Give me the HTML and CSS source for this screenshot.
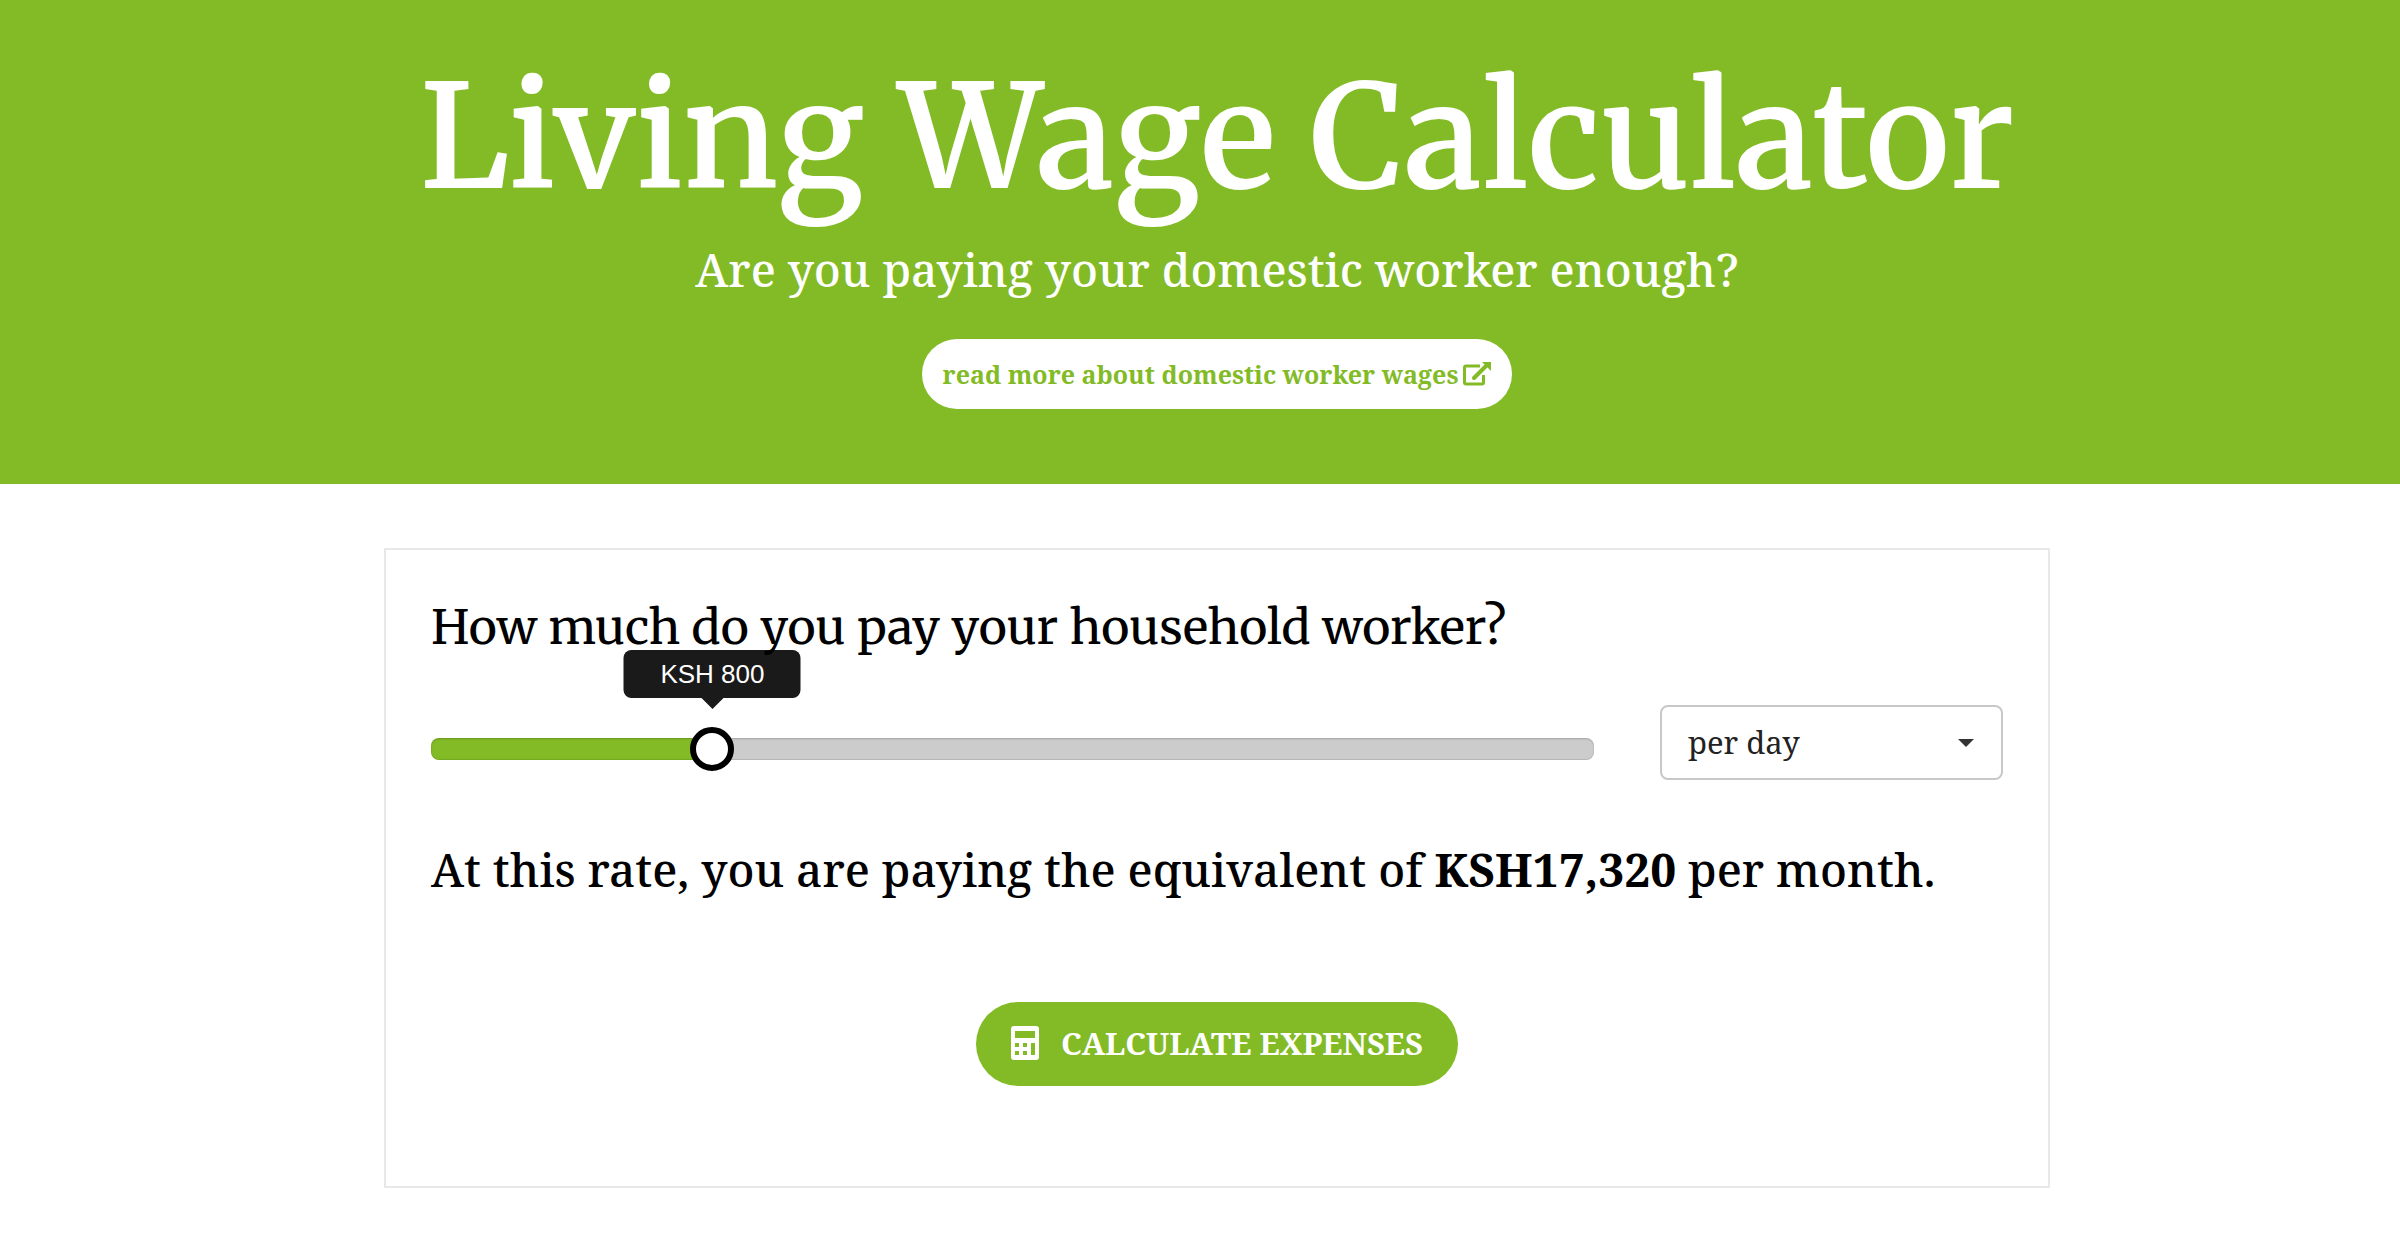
FILE: index.html
```
<!DOCTYPE html>
<html lang="en">
<head>
    <meta charset="UTF-8">
    <meta name="viewport" content="width=device-width, initial-scale=1.0">
    <title>Living Wage Calculator</title>
    <link rel="stylesheet" href="styles.css">
</head>
<body>
    <header class="banner">
        <h1>Living Wage Calculator</h1>
        <p class="tagline">Are you paying your domestic worker enough?</p>
        <a class="read-more" href="#">
            read more about domestic worker wages
            <svg class="link-icon" viewBox="0 0 28 26" aria-hidden="true">
                <path d="M17 5H3Q1.500 5 1.500 6.500V21.500Q1.500 23 3 23H19Q20.500 23 20.500 21.500V14" fill="none" stroke="currentColor" stroke-width="3"/>
                <path d="M11 17L24 4" fill="none" stroke="currentColor" stroke-width="4" stroke-linecap="round"/>
                <path d="M19 1h9v9z" fill="currentColor"/>
            </svg>
        </a>
    </header>

    <main class="calculator">
        <label class="question" for="wage">How much do you pay your household worker?</label>
        <div class="controls">
            <div class="slider" id="slider" style="--position: 0.2319">
                <input class="range" type="range" id="wage" min="0" max="3450" step="50" value="800">
                <output class="tooltip" id="tooltip" for="wage">KSH 800</output>
            </div>
            <div class="period">
                <select class="period-select" id="period" aria-label="Pay period">
                    <option value="21.65">per day</option>
                    <option value="4.33">per week</option>
                    <option value="1">per month</option>
                </select>
                <svg class="caret" viewBox="0 0 16 8" aria-hidden="true">
                    <path d="M0 0h16L8 8z" fill="currentColor"/>
                </svg>
            </div>
        </div>
        <p class="result">At this rate, you are paying the equivalent of <strong id="total">KSH17,320</strong> per month.</p>
        <button class="calculate" type="button">
            <svg class="calc-icon" viewBox="0 0 28 34" aria-hidden="true">
                <path fill="currentColor" fill-rule="evenodd" d="M3 0h22q3 0 3 3v28q0 3-3 3H3q-3 0-3-3V3q0-3 3-3zM4 5v7h20V5zM4 17v4h4v-4zM12 17v4h4v-4zM20 17v12h4V17zM4 25v4h4v-4zM12 25v4h4v-4z"/>
            </svg>
            CALCULATE EXPENSES
        </button>
    </main>

    <script>
        const wage = document.getElementById("wage");
        const period = document.getElementById("period");

        function update() {
            const total = Math.round(wage.value * period.value);
            document.getElementById("slider").style.setProperty("--position", wage.value / wage.max);
            document.getElementById("tooltip").textContent = "KSH " + wage.value;
            document.getElementById("total").textContent = "KSH" + total.toLocaleString("en-US");
        }

        wage.addEventListener("input", update);
        period.addEventListener("change", update);
    </script>
</body>
</html>
```
FILE: styles.css
```
* {
    box-sizing: border-box;
}

body {
    margin: 0;
    padding-left: 34px;
    font-family: "Noto Serif", "Liberation Serif", serif;
    color: #000;
    background-color: #fff;
}

.banner {
    display: flex;
    flex-direction: column;
    align-items: center;
    margin-left: -34px;
    padding: 41px 0 75px 34px;
    background-color: #83bb26;
    color: #fff;
}

h1,
.question {
    font-family: "Merriweather", "Noto Serif", "Liberation Serif", serif;
}

h1 {
    margin: 0;
    font-size: 143px;
    font-weight: 600;
    line-height: 192px;
}

.tagline {
    margin: 4px 0 38px;
    font-size: 46px;
    font-weight: 500;
    line-height: 64px;
}

.read-more {
    display: flex;
    align-items: center;
    gap: 5px;
    padding: 16px 21px;
    border-radius: 35px;
    background-color: #fff;
    color: #83bb26;
    font-size: 25px;
    font-weight: 700;
    line-height: 38px;
    text-decoration: none;
}

.link-icon {
    width: 28px;
    height: 26px;
}

.calculator {
    display: flex;
    flex-direction: column;
    max-width: 1666px;
    margin: 64px auto 0;
    padding: 45px 45px 100px;
    border: 2px solid #e8e8e8;
}

.question {
    position: relative;
    z-index: 1;
    font-size: 48px;
    line-height: 64px;
}

.controls {
    display: flex;
    align-items: center;
    gap: 66px;
    margin-top: 46px;
}

.slider {
    --thumb: calc(22px + (100% - 44px) * var(--position));
    position: relative;
    flex: 1;
    margin-top: 12px;
}

.range {
    display: block;
    width: 100%;
    height: 44px;
    margin: 0;
    background: none;
    appearance: none;
}

.range::-webkit-slider-runnable-track {
    height: 22px;
    border-radius: 8px;
    background: linear-gradient(to right, #83bb26 var(--thumb), #ccc var(--thumb));
    box-shadow: inset 0 1px 2px rgba(0, 0, 0, 0.2), inset 0 -1px 1px rgba(0, 0, 0, 0.1);
}

.range::-webkit-slider-thumb {
    width: 44px;
    height: 44px;
    margin-top: -11px;
    border: 6px solid #000;
    border-radius: 50%;
    background-color: #fff;
    appearance: none;
}

.tooltip {
    position: absolute;
    bottom: 73px;
    left: var(--thumb);
    width: 177px;
    border-radius: 8px;
    background-color: #1a1a1a;
    color: #fff;
    font-family: "Liberation Sans", Arial, sans-serif;
    font-size: 26px;
    line-height: 48px;
    text-align: center;
    transform: translateX(-50%);
}

.tooltip::after {
    content: "";
    position: absolute;
    top: 100%;
    left: 50%;
    margin-left: -11px;
    border: 11px solid transparent;
    border-top-color: #1a1a1a;
    border-bottom: 0;
}

.period {
    position: relative;
    width: 343px;
}

.period-select {
    width: 100%;
    height: 75px;
    padding: 0 26px 2px;
    border: 2px solid #c8c8c8;
    border-radius: 8px;
    background-color: #fff;
    color: #222;
    font-family: inherit;
    font-size: 31px;
    appearance: none;
}

.caret {
    position: absolute;
    top: 34px;
    right: 29px;
    width: 16px;
    height: 8px;
    color: #333;
    pointer-events: none;
}

.result {
    margin: 57px 0 101px;
    font-size: 46px;
    font-weight: 500;
    line-height: 64px;
}

.calculate {
    display: flex;
    align-items: center;
    align-self: center;
    gap: 22px;
    height: 84px;
    padding: 0 35px 2px;
    border: 0;
    border-radius: 42px;
    background-color: #83bb26;
    color: #fff;
    font-family: inherit;
    font-size: 31px;
    font-weight: 700;
}

.calc-icon {
    width: 28px;
    height: 34px;
}
```
